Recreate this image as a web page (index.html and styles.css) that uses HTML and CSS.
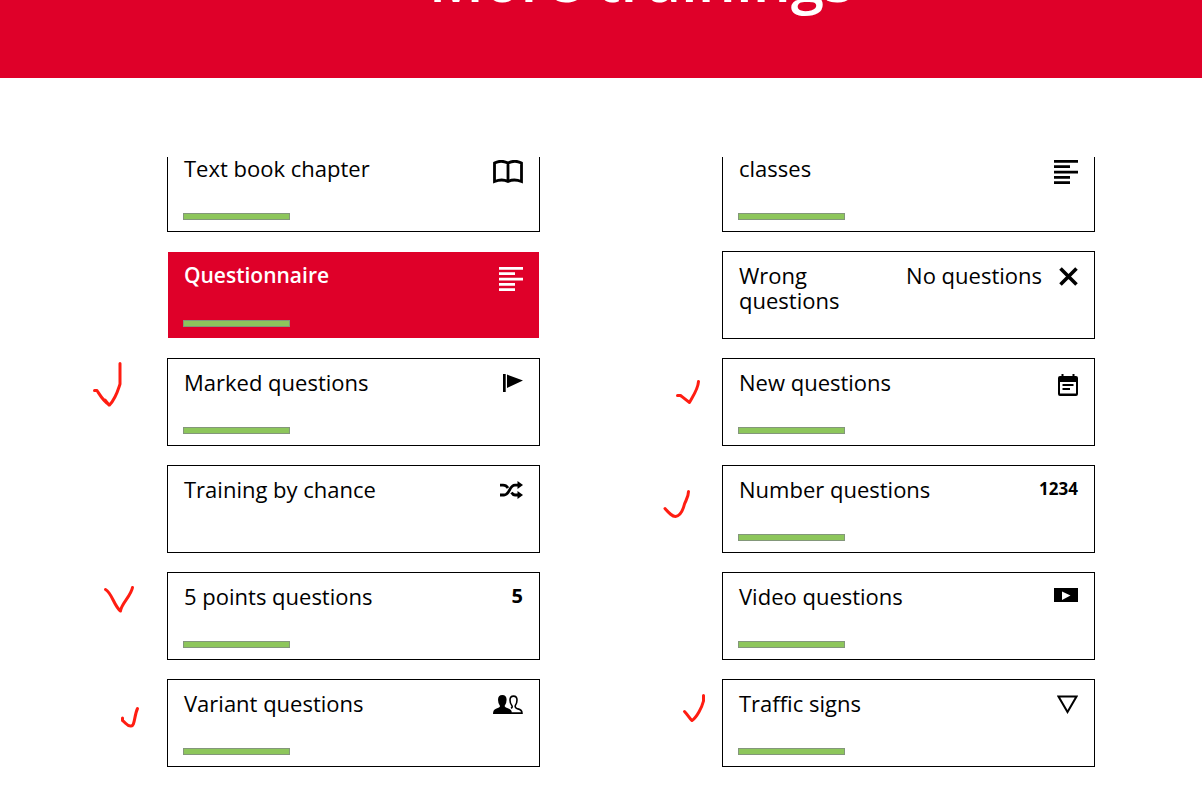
FILE: index.html
```html
<!DOCTYPE html>
<html lang="en">
<head>
<meta charset="utf-8">
<title>More trainings</title>
<meta name="viewport" content="width=device-width, initial-scale=1">
<link rel="stylesheet" href="styles.css">
</head>
<body>
<header class="banner"><h1 class="banner-title">More trainings</h1></header>
<main class="trainings">
  <div class="grid">
    <a class="card" href="#chapter">
      <span class="label">Text book chapter</span>
      <svg class="icon" width="30" height="24" viewBox="0 0 30 24"><path d="M1.5 21.5V3Q8-.5 15 3Q22-.5 28.500 3V21.500Q21 18.500 15 21.500Q9 18.500 1.500 21.500ZM15 3V21" fill="none" stroke="currentColor" stroke-width="2.800"/></svg>
      <span class="bar"></span>
    </a>
    <a class="card" href="#classes">
      <span class="label">classes</span>
      <svg class="icon" width="24" height="24" viewBox="0 0 24 24"><path d="M0 0h24v2.700H0zM0 5.300h16V8H0zM0 10.700h24v2.700H0zM0 16h16v2.700H0zM0 21.300h16V24H0z" fill="currentColor"/></svg>
      <span class="bar"></span>
    </a>
    <a class="card active" href="#questionnaire">
      <span class="label">Questionnaire</span>
      <svg class="icon" width="24" height="24" viewBox="0 0 24 24"><path d="M0 0h24v2.700H0zM0 5.300h16V8H0zM0 10.700h24v2.700H0zM0 16h16v2.700H0zM0 21.300h16V24H0z" fill="currentColor"/></svg>
      <span class="bar"></span>
    </a>
    <a class="card" href="#wrong">
      <span class="label narrow">Wrong questions</span>
      <span class="status">No questions</span>
      <svg class="icon" width="19" height="19" viewBox="0 0 19 19"><path d="M1.500 1.500l16 16m0-16l-16 16" stroke="currentColor" stroke-width="3.600"/></svg>
    </a>
    <a class="card" href="#marked">
      <svg class="mark" width="80" height="60" viewBox="87 358 80 60"><path d="M93.500 390.500H96C99 395 102 401 108.500 405C115 398 117 390 119 384V363.500M104 400L108 405"/></svg>
      <span class="label">Marked questions</span>
      <svg class="icon" width="20" height="18" viewBox="0 0 20 18"><path d="M0 0h2.700v18H0zM4 .5v13.500L20 6.500z" fill="currentColor"/></svg>
      <span class="bar"></span>
    </a>
    <a class="card" href="#new">
      <svg class="mark" width="80" height="60" viewBox="642 358 80 60"><path d="M676.500 395.500H679.500C682 397.500 685 400 688.500 402.500C690 399 697 390 697.500 381.500"/></svg>
      <span class="label">New questions</span>
      <svg class="icon" width="20" height="22" viewBox="0 0 20 22"><path d="M3.500 0h2v2h9V0h2v2H18q2 0 2 2v16q0 2-2 2H2q-2 0-2-2V4q0-2 2-2h1.500zM2 8v11.500h16V8z" fill="currentColor" fill-rule="evenodd"/><path d="M4.500 11h11M4.500 15h7.500" stroke="currentColor" stroke-width="2"/></svg>
      <span class="bar"></span>
    </a>
    <a class="card" href="#chance">
      <span class="label">Training by chance</span>
      <svg class="icon" width="23" height="18" viewBox="0 0 23 18"><path d="M0 4.200H3C6 4.200 7 5.500 8 7M0 14H4C10 14 9 4.200 15 4.200H18M11.500 11.500Q13 14 15 14H18" fill="none" stroke="currentColor" stroke-width="2.800"/><path d="M17.500 0L23 4l-5.500 4zM17.500 10L23 14l-5.500 4z" fill="currentColor"/></svg>
    </a>
    <a class="card" href="#number">
      <svg class="mark" width="80" height="60" viewBox="642 465 80 60"><path d="M664 508.500C668 513 671 516.500 674.500 516.500C679 516 682 510 683.500 504C685 500 687.500 497 687.500 491.500"/></svg>
      <span class="label">Number questions</span>
      <strong class="digits">1234</strong>
      <span class="bar"></span>
    </a>
    <a class="card" href="#five">
      <svg class="mark" width="80" height="60" viewBox="87 572 80 60"><path d="M104.500 589.500C111 593 113 606 119.500 611C120 604 130 596 131.500 587.500"/></svg>
      <span class="label">5 points questions</span>
      <strong class="digits large">5</strong>
      <span class="bar"></span>
    </a>
    <a class="card" href="#video">
      <span class="label">Video questions</span>
      <svg class="icon" width="24" height="14" viewBox="0 0 24 14"><path d="M0 0h24v14H0zM8 3.500v8.500L16.500 7.500z" fill="currentColor" fill-rule="evenodd"/></svg>
      <span class="bar"></span>
    </a>
    <a class="card" href="#variant">
      <svg class="mark" width="80" height="60" viewBox="87 679 80 60"><path d="M121.500 718V720.500C125 723 126 726 129.500 726C134 727 133 716 136.500 708.500"/></svg>
      <span class="label">Variant questions</span>
      <svg class="icon" width="30" height="19" viewBox="0 0 30 18" preserveAspectRatio="none"><path d="M0 18Q0 14 3 13Q7 12 7 10.500Q5 8 5 4.500Q5 0 9.300 0T13.600 4.500Q13.600 8 11.600 10.500Q12 12 16 13Q19 14 19 18z" fill="currentColor"/><path d="M18 12.500Q20 11.500 18.800 10Q17 8 17 4.700Q17 1 20.500 1T24 4.700Q24 8 22.300 10Q21.500 12 25 13.200Q29 14 29 17.200H18.500" fill="none" stroke="currentColor" stroke-width="1.600"/></svg>
      <span class="bar"></span>
    </a>
    <a class="card" href="#traffic">
      <svg class="mark" width="80" height="60" viewBox="642 679 80 60"><path d="M683.500 711.500C687 715 688 718 691 720.500C696 717 701 707 702.500 701V695.500"/></svg>
      <span class="label">Traffic signs</span>
      <svg class="icon" width="21" height="19" viewBox="0 0 21 19"><path d="M1.500 1.500h18L10.500 17z" fill="none" stroke="currentColor" stroke-width="2"/></svg>
      <span class="bar"></span>
    </a>
  </div>
</main>
</body>
</html>
```

FILE: styles.css
```css
* { box-sizing: border-box; }
body {
  margin: 0;
  background: #fff;
  color: #000;
  font-family: "Open Sans", "Noto Sans", sans-serif;
}
.banner {
  display: flex;
  flex-direction: column;
  justify-content: flex-end;
  height: 78px;
  padding: 0 0 61px 80px;
  overflow: hidden;
  background: #df0029;
  color: #fff;
}
.banner-title {
  margin: 0;
  text-align: center;
  font-size: 60px;
  font-weight: 600;
  line-height: 76px;
}
.trainings {
  margin-top: 79px;
  overflow: hidden;
}
.grid {
  display: grid;
  grid-template-columns: 1fr 1fr;
  gap: 19px 182px;
  margin-top: -13px;
  padding: 0 107px 32px 167px;
}
.card {
  position: relative;
  display: flex;
  align-items: flex-start;
  min-height: 88px;
  padding: 11px 16px;
  border: 1px solid #000;
  color: inherit;
  text-decoration: none;
  font-size: 22px;
  font-weight: 500;
  line-height: 25px;
}
.active {
  border-color: #fff;
  background: #df0029;
  background-clip: padding-box;
  color: #fff;
  font-size: 21px;
  font-weight: 600;
}
.label { margin-right: auto; }
.narrow { width: 120px; }
.status { margin-right: 17px; }
.icon {
  flex: none;
  margin-top: 4px;
}
.digits {
  font-size: 17px;
  line-height: 23px;
}
.large { font-size: 20px; }
.bar {
  position: absolute;
  left: 15px;
  bottom: 11px;
  width: 107px;
  height: 7px;
  border: 1px solid #83977a;
  background: #8dc65b;
}
.mark {
  position: absolute;
  top: -1px;
  right: 100%;
  fill: none;
  stroke: #ff1d12;
  stroke-width: 3;
  stroke-linecap: round;
  stroke-linejoin: round;
}
```
